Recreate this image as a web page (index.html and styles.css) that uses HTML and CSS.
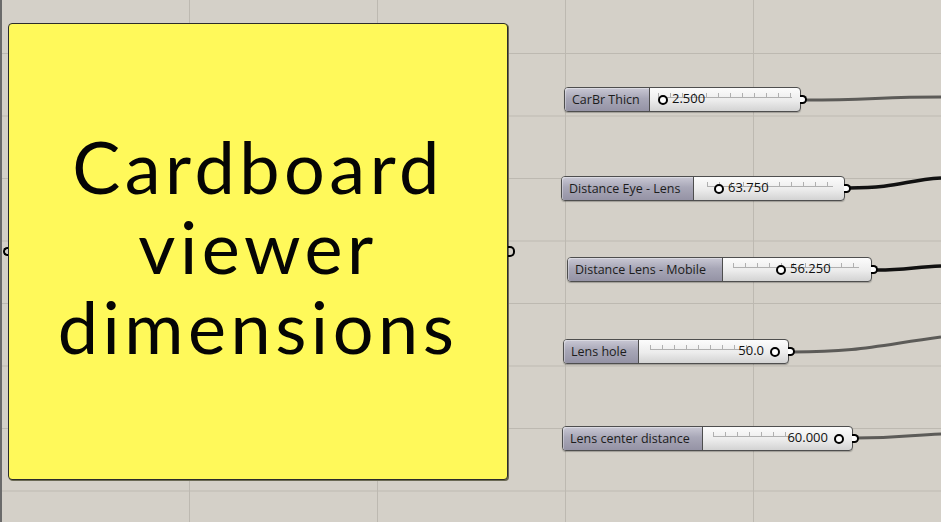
FILE: index.html
```html
<!DOCTYPE html>
<html lang="en">
<head>
    <meta charset="UTF-8">
    <meta name="viewport" content="width=device-width, initial-scale=1.0">
    <title>Cardboard viewer dimensions</title>
    <link rel="stylesheet" href="styles.css">
</head>
<body>
    <div class="canvas">
        <div class="edge"></div>

        <!-- wires behind the nodes -->
        <svg class="wires" width="941" height="522" viewBox="0 0 941 522">
            <path class="wire" d="M805 100 C 870 100, 880 97, 941 97"/>
            <path class="wire wire-active" d="M849 188 C 900 188, 905 180, 941 178"/>
            <path class="wire wire-active" d="M877 270 C 905 270, 915 267, 941 266"/>
            <path class="wire" d="M793 352 C 860 352, 880 345, 941 337"/>
            <path class="wire" d="M856 438 C 900 438, 910 435, 941 434"/>
        </svg>

        <div class="panel">
            <span class="grip grip-in"></span>
            <div class="panel-text">Cardboard<br>viewer<br>dimensions</div>
            <span class="grip grip-out"></span>
        </div>

        <div class="slider slider-1">
            <div class="slider-label">CarBr Thicn</div>
            <div class="slider-body">
                <div class="ticks"></div>
                <span class="knob"></span><span class="value">2.500</span>
            </div>
            <span class="grip grip-out"></span>
        </div>

        <div class="slider slider-2">
            <div class="slider-label">Distance Eye - Lens</div>
            <div class="slider-body">
                <div class="ticks"></div>
                <span class="knob"></span><span class="value">63.750</span>
            </div>
            <span class="grip grip-out"></span>
        </div>

        <div class="slider slider-3">
            <div class="slider-label">Distance Lens - Mobile</div>
            <div class="slider-body">
                <div class="ticks"></div>
                <span class="knob"></span><span class="value">56.250</span>
            </div>
            <span class="grip grip-out"></span>
        </div>

        <div class="slider slider-4">
            <div class="slider-label">Lens hole</div>
            <div class="slider-body">
                <div class="ticks"></div>
                <span class="value">50.0</span><span class="knob"></span>
            </div>
            <span class="grip grip-out"></span>
        </div>

        <div class="slider slider-5">
            <div class="slider-label">Lens center distance</div>
            <div class="slider-body">
                <div class="ticks"></div>
                <span class="value">60.000</span><span class="knob"></span>
            </div>
            <span class="grip grip-out"></span>
        </div>
    </div>
</body>
</html>
```

FILE: styles.css
```css
html, body {
    margin: 0;
    padding: 0;
    overflow: hidden;
}

body {
    font-family: 'Open Sans', 'DejaVu Sans', sans-serif;
    background-color: #d4d0c8;
}

/* grasshopper style canvas with grid */
.canvas {
    position: relative;
    width: 941px;
    height: 522px;
    background-color: #d4d0c8;
    background-image:
        linear-gradient(to right, #bdb9b1 1px, transparent 1px),
        linear-gradient(to bottom, #bdb9b1 1px, transparent 1px);
    background-size: 188px 100%, 100% 62.5px;
    background-position: 1px 0, 0 -9.5px;
}

.edge {
    position: absolute;
    left: 0;
    top: 0;
    width: 2px;
    height: 100%;
    background-color: #6a6a6a;
}

.wires {
    position: absolute;
    left: 0;
    top: 0;
}

.wire {
    fill: none;
    stroke: #5c5b58;
    stroke-width: 3;
}

.wire-active {
    stroke: #111;
    stroke-width: 3.5;
}

/* yellow panel */
.panel {
    position: absolute;
    left: 8px;
    top: 23px;
    width: 498px;
    height: 455px;
    background-color: #fff95a;
    border: 1px solid #2b2b2b;
    border-radius: 4px;
    box-shadow: 1px 1px 0 #6b6a55;
    display: flex;
    align-items: center;
    justify-content: center;
}

.panel-text {
    font-family: 'Lato', 'Noto Sans', sans-serif;
    font-size: 72px;
    line-height: 80px;
    letter-spacing: 4.5px;
    text-align: center;
    color: #050505;
    margin-top: -12px;
}

.grip {
    position: absolute;
    top: 50%;
    width: 7px;
    height: 9px;
    margin-top: -5px;
    border: 2px solid #000;
    background-color: #fff;
    box-sizing: border-box;
}

.panel .grip-in {
    left: -6px;
    border-radius: 5px 0 0 5px;
    border-right: none;
    background-color: transparent;
    width: 5px;
}

.grip-out {
    right: -7px;
    border-radius: 0 5px 5px 0;
    border-left: none;
}

.panel .grip-out {
    right: -8px;
    margin-top: -6px;
    height: 11px;
    background-color: transparent;
}

/* number sliders */
.slider {
    position: absolute;
    height: 25px;
    display: flex;
    border: 1px solid #4e4e4e;
    border-radius: 4px;
    box-sizing: border-box;
    box-shadow: 0 1px 1px rgba(0, 0, 0, 0.25);
    background: linear-gradient(#fcfcfc, #ececec 55%, #d3d3d3);
}

.slider-label {
    display: flex;
    align-items: center;
    padding: 0 7px;
    font-size: 12.5px;
    color: #1c1c1c;
    white-space: nowrap;
    background: linear-gradient(#c9c8d4, #a8a7b7 45%, #9593a5);
    border-right: 1px solid #4e4e4e;
    border-radius: 3px 0 0 3px;
    box-shadow: inset 1px 1px 0 rgba(255, 255, 255, 0.35);
}

.slider-body {
    position: relative;
    flex: 1;
    display: flex;
    align-items: center;
    padding: 0 8px;
}

.ticks {
    position: absolute;
    top: 5px;
    height: 4px;
    border-bottom: 1px solid #b0b0b0;
    background-image: repeating-linear-gradient(to right, #b0b0b0 0, #b0b0b0 1px, transparent 1px, transparent 12px);
}

.knob {
    display: inline-block;
    width: 10px;
    height: 10px;
    border: 2px solid #000;
    border-radius: 50%;
    background-color: #fff;
    box-sizing: border-box;
    position: relative;
}

.value {
    position: relative;
    top: -1px;
    font-size: 13px;
    line-height: 1;
    color: #111;
    margin-left: 4px;
}

.slider-1 { left: 564px; top: 87px; width: 237px; }
.slider-1 .slider-label { width: 70px; }
.slider-1 .ticks { left: 8px; right: 8px; }

.slider-2 { left: 561px; top: 176px; width: 284px; }
.slider-2 .slider-label { width: 117px; }
.slider-2 .ticks { left: 13px; right: 11px; }
.slider-2 .slider-body { padding-left: 20px; }

.slider-3 { left: 567px; top: 257px; width: 305px; }
.slider-3 .slider-label { width: 140px; }
.slider-3 .ticks { left: 10px; right: 12px; }
.slider-3 .slider-body { padding-left: 53px; }

.slider-4 { left: 563px; top: 339px; width: 226px; }
.slider-4 .slider-label { width: 60px; }
.slider-4 .ticks { left: 11px; right: 38px; }
.slider-4 .slider-body { justify-content: flex-end; padding-right: 8px; }
.slider-4 .value { margin: 0 6px 0 0; }

.slider-5 { left: 562px; top: 426px; width: 291px; }
.slider-5 .slider-label { width: 125px; }
.slider-5 .ticks { left: 10px; right: 60px; }
.slider-5 .slider-body { justify-content: flex-end; padding-right: 8px; }
.slider-5 .value { margin: 0 6px 0 0; }
```
